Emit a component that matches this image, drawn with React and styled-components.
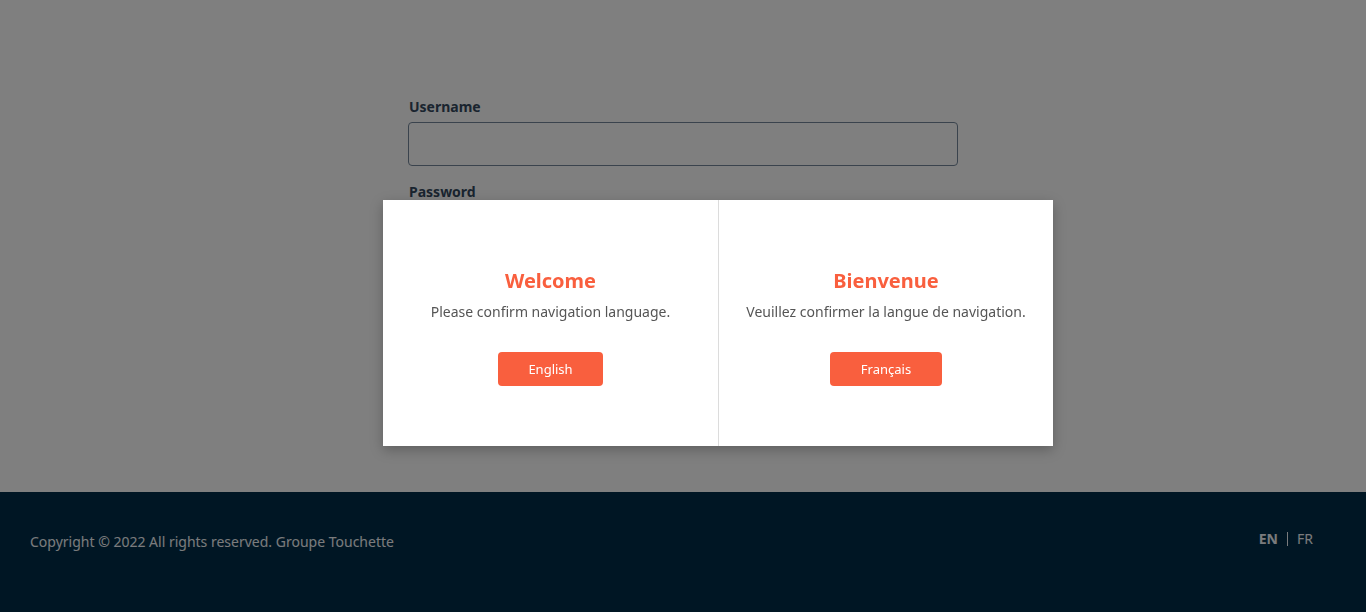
import React from 'react';
import styled, { createGlobalStyle } from 'styled-components';

const GlobalStyle = createGlobalStyle`
  html, body {
    margin: 0;
    padding: 0;
  }
  body {
    font-family: "Noto Sans", "Open Sans", sans-serif;
    background: #ffffff;
  }
  * {
    box-sizing: border-box;
  }
`;

const Page = styled.div`
  display: flex;
  flex-direction: column;
  min-height: 645px;
`;

const Main = styled.main`
  height: 492px;
  display: flex;
  justify-content: center;
  padding-top: 97px;
`;

const LoginForm = styled.form`
  width: 550px;
  display: flex;
  flex-direction: column;
`;

const Label = styled.label`
  font-size: 14px;
  font-weight: 700;
  color: #34495e;
  margin: 0 0 6px 1px;
`;

const Input = styled.input`
  height: 44px;
  border: 1px solid #74879a;
  border-radius: 4px;
  margin-bottom: 16px;
  font-family: inherit;
  font-size: 14px;
  background: #fff;
`;

const Footer = styled.footer`
  flex: 1;
  background: #002c48;
  display: flex;
  justify-content: space-between;
  align-items: flex-start;
  padding: 40px 53px 0 30px;
  color: #f4f7fa;
  font-size: 14px;
`;

const Copyright = styled.p`
  margin: 0;
  line-height: 20px;
`;

const LangSwitch = styled.div`
  display: flex;
  align-items: center;
  gap: 9px;
  margin-top: -3px;
  font-size: 14px;
`;

const LangLink = styled.a`
  color: inherit;
  text-decoration: none;
  font-weight: ${p => (p.$active ? 700 : 400)};
  cursor: pointer;
`;

const Divider = styled.span`
  width: 1px;
  height: 14px;
  background: #f4f7fa;
`;

const Overlay = styled.div`
  position: fixed;
  inset: 0;
  background: rgba(0, 0, 0, 0.5);
  z-index: 10;
`;

const Modal = styled.div`
  position: fixed;
  left: 383px;
  top: 200px;
  width: 670px;
  height: 246px;
  background: #fff;
  display: grid;
  grid-template-columns: 335px 335px;
  box-shadow: 0 4px 12px rgba(0, 0, 0, 0.25);
  z-index: 20;
`;

const Side = styled.section`
  display: flex;
  flex-direction: column;
  align-items: center;
  padding-top: 67px;
  border-left: ${p => (p.$divided ? '1px solid #dcdcdc' : 'none')};
`;

const Title = styled.h2`
  margin: 0;
  font-size: 20px;
  font-weight: 700;
  line-height: 28px;
  color: #f95f3e;
`;

const Text = styled.p`
  margin: 7px 0 0;
  font-size: 14px;
  line-height: 20px;
  color: #555;
`;

const LangButton = styled.button`
  margin-top: 30px;
  height: 34px;
  padding: 0 ${p => p.$pad}px;
  border: none;
  border-radius: 4px;
  background: #f95f3e;
  color: #fff;
  font-family: inherit;
  font-size: 13px;
  cursor: pointer;
`;

export default function App() {
  return (
    <>
      <GlobalStyle />
      <Page>
        <Main>
          <LoginForm>
            <Label htmlFor="username">Username</Label>
            <Input id="username" type="text" />
            <Label htmlFor="password">Password</Label>
            <Input id="password" type="password" />
          </LoginForm>
        </Main>
        <Footer>
          <Copyright>Copyright © 2022 All rights reserved. Groupe Touchette</Copyright>
          <LangSwitch>
            <LangLink $active>EN</LangLink>
            <Divider />
            <LangLink>FR</LangLink>
          </LangSwitch>
        </Footer>
      </Page>
      <Overlay />
      <Modal>
        <Side>
          <Title>Welcome</Title>
          <Text>Please confirm navigation language.</Text>
          <LangButton $pad={30}>English</LangButton>
        </Side>
        <Side $divided>
          <Title>Bienvenue</Title>
          <Text>Veuillez confirmer la langue de navigation.</Text>
          <LangButton $pad={31}>Français</LangButton>
        </Side>
      </Modal>
    </>
  );
}
